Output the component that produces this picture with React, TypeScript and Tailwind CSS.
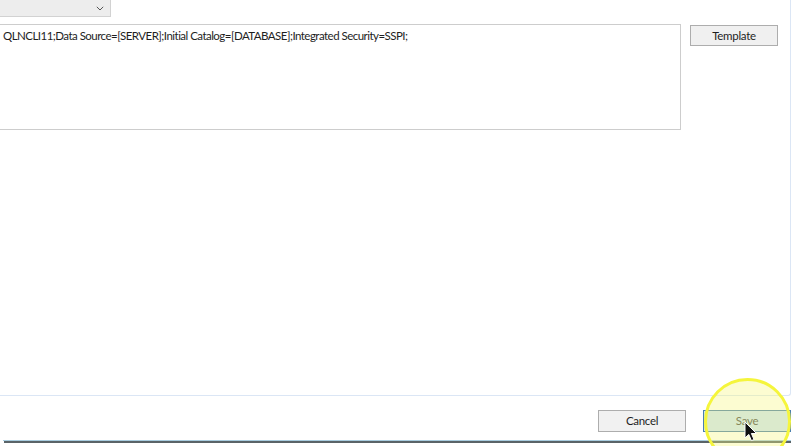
import React from "react";

export default function App() {
  const font = { fontFamily: 'Lato, "Noto Sans", sans-serif' };
  return (
    <div className="relative w-[800px] h-[446px] bg-white overflow-hidden text-[#1e1e1e]" style={font}>
      <div className="flex flex-col h-full">
        {/* main panel */}
        <div className="h-[396px] w-[791px] border-r border-b border-[#dbe6f5] rounded-br-[3px] flex flex-col">
          <div className="h-[17px] w-[111px] bg-[#ededed] border-r border-b border-[#d2d2d2] flex items-center justify-end pr-[6px]">
            <svg width="8" height="5" viewBox="0 0 8 5">
              <path d="M0.8 0.8 L4 4 L7.2 0.8" fill="none" stroke="#555" strokeWidth="1" />
            </svg>
          </div>
          <div className="flex mt-[7px]">
            <div className="w-[681px] h-[106px] border border-l-0 border-[#cdcdcd] bg-white pl-[3px] pt-[3px] text-[11.5px] tracking-[-0.53px] leading-[15px] whitespace-nowrap overflow-hidden">
              QLNCLI11;Data Source=[SERVER];Initial Catalog=[DATABASE];Integrated Security=SSPI;
            </div>
            <button className="ml-[9px] mt-[1px] w-[88px] h-[21px] bg-[#f0f0f0] border border-[#adadad] text-[11.5px] tracking-[-0.3px] leading-none text-[#1e1e1e]">
              Template
            </button>
          </div>
        </div>
        {/* buttons */}
        <div className="flex justify-end mt-[14px] pr-[9px] gap-[17px]">
          <button className="w-[88px] h-[22px] bg-[#f1f1f1] border border-[#adadad] text-[11.5px] tracking-[-0.3px] leading-none text-[#1e1e1e]">
            Cancel
          </button>
          <button className="w-[88px] h-[22px] bg-[#cce4f7] border border-[#4a7fae] text-[11.5px] tracking-[-0.3px] leading-none text-[#4a4a4a]">
            Save
          </button>
        </div>
        <div className="mt-[8px] ml-[3px] w-[788px] h-[1px] bg-[#a9cde0]" />
        <div className="ml-[4px] w-[787px] h-[2px] bg-[#5a6468]" />
      </div>

      {/* cursor highlight */}
      <div className="absolute left-[704px] top-[378px] w-[87px] h-[87px] rounded-full border-[3px] border-[#f5f53c] bg-[#f5f57a]/35" />
      <svg className="absolute left-[744px] top-[421px]" width="14" height="22" viewBox="0 0 14 22">
        <path d="M1 1 L1 17 L4.8 13.4 L7.4 19.6 L10 18.5 L7.4 12.5 L12.5 12.5 Z" fill="#111" stroke="#fff" strokeWidth="1" strokeLinejoin="round" />
      </svg>
    </div>
  );
}
